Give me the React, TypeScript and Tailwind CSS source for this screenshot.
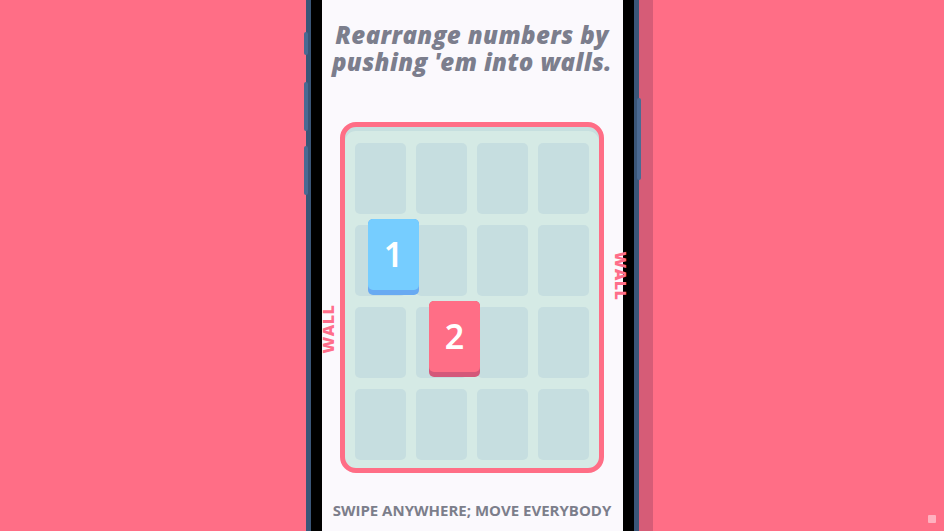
import React from "react";

const cells = Array.from({ length: 16 });

export default function App() {
  return (
    <div className="w-[944px] h-[531px] overflow-hidden bg-[#ff6e86] flex justify-center relative">
      <div className="relative w-[333px] h-full">
        {/* right shadow */}
        <div className="absolute left-full top-0 h-full w-[14px] bg-[#d65c77]" />
        {/* side buttons */}
        <div className="absolute left-[-2px] top-[32px] w-[4px] h-[23px] rounded-sm bg-[#4a6a93]" />
        <div className="absolute left-[-2px] top-[82px] w-[4px] h-[49px] rounded-sm bg-[#4a6a93]" />
        <div className="absolute left-[-2px] top-[146px] w-[4px] h-[49px] rounded-sm bg-[#4a6a93]" />
        <div className="absolute right-[-2px] top-[98px] w-[4px] h-[82px] rounded-sm bg-[#4a6a93]" />
        <div className="h-full border-x-[5px] border-[#3a5678]">
          <div className="h-full border-x-[11px] border-black bg-[#fbf9fd] flex flex-col items-center">
            <h1
              className="pt-[21px] text-center text-[24px] leading-[27px] font-extrabold italic text-[#7c7e8d] tracking-[0.4px]"
              style={{ fontFamily: '"Open Sans", "Noto Sans", sans-serif' }}
            >
              Rearrange numbers by
              <br />
              pushing 'em into walls.
            </h1>
            <div className="relative mt-[47px] w-[264px] h-[351px] rounded-[16px] border-[5px] border-[#ff6e86] bg-[#d5eae5] shadow-[inset_0_4px_0_#c6dfdf] pt-[16px] px-[10px]">
              <div className="grid grid-cols-[repeat(4,51px)] grid-rows-[repeat(4,71px)] gap-x-[10px] gap-y-[11px]">
                {cells.map((_, i) => (
                  <div key={i} className="rounded-[5px] bg-[#c6dee0]" />
                ))}
              </div>
              {/* tile 1 */}
              <div className="absolute left-[23px] top-[92px] w-[51px] h-[76px] rounded-[5px] bg-[#69aaf2]">
                <div
                  className="h-[71px] rounded-[5px] bg-[#76cdff] flex items-center justify-center text-white text-[34px] font-semibold"
                  style={{ fontFamily: '"Noto Sans", "Open Sans", sans-serif' }}
                >
                  1
                </div>
              </div>
              {/* tile 2 */}
              <div className="absolute left-[84px] top-[174px] w-[51px] h-[76px] rounded-[5px] bg-[#d4587a]">
                <div
                  className="h-[71px] rounded-[5px] bg-[#ff6e86] flex items-center justify-center text-white text-[34px] font-semibold"
                  style={{ fontFamily: '"Noto Sans", "Open Sans", sans-serif' }}
                >
                  2
                </div>
              </div>
              {/* wall labels */}
              <div
                className="absolute left-[276px] top-[149px] -translate-x-1/2 -translate-y-1/2 rotate-90 text-[16px] leading-none font-extrabold text-[#ff6e8a] tracking-[0.5px]"
                style={{ fontFamily: '"Open Sans", "Noto Sans", sans-serif' }}
              >
                WALL
              </div>
              <div
                className="absolute left-[-17px] top-[202px] -translate-x-1/2 -translate-y-1/2 -rotate-90 text-[16px] leading-none font-extrabold text-[#ff6e8a] tracking-[0.5px]"
                style={{ fontFamily: '"Open Sans", "Noto Sans", sans-serif' }}
              >
                WALL
              </div>
            </div>
            <p
              className="mt-[27px] text-[15px] leading-[20px] font-bold text-[#7c7e8b] whitespace-nowrap"
              style={{ fontFamily: '"Open Sans", "Noto Sans", sans-serif' }}
            >
              SWIPE ANYWHERE; MOVE EVERYBODY
            </p>
          </div>
        </div>
      </div>
      <div className="absolute left-[928px] top-[515px] w-[8px] h-[8px] rounded-[1px] bg-[#ffc2cd] opacity-80" />
    </div>
  );
}
